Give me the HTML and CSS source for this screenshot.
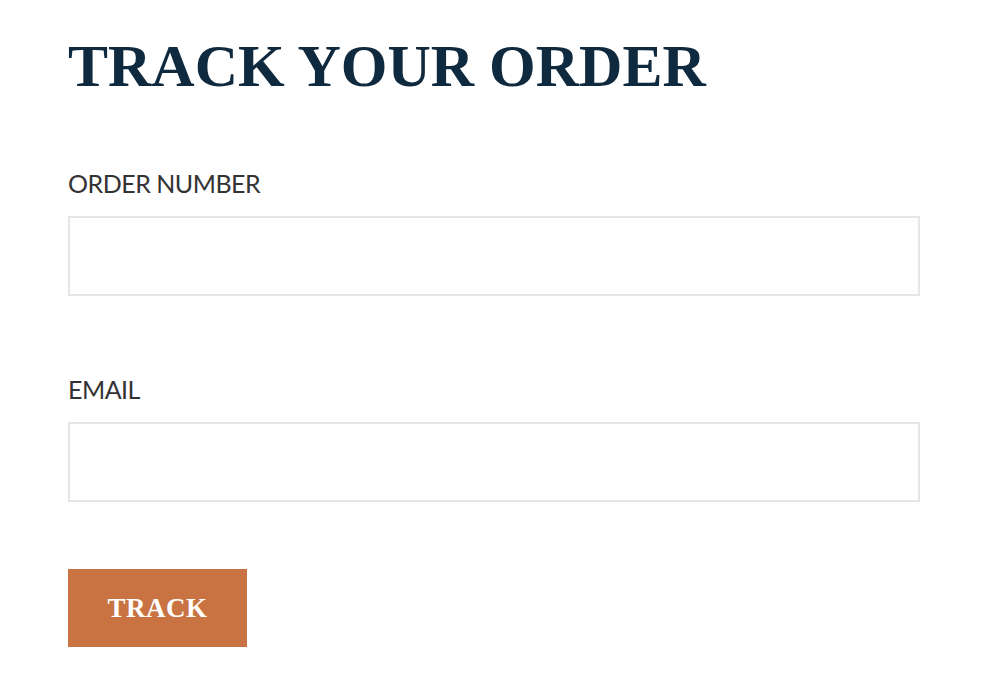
FILE: index.html
```html
<!DOCTYPE html>
<html lang="en">
<head>
  <meta charset="UTF-8">
  <title>Track your order</title>
  <link rel="stylesheet" href="styles.css">
</head>
<body>
  <div class="container">
    <h1>Track your order</h1>
    <form class="track-form">
      <label class="field">
        <span class="label">Order number</span>
        <input type="text" name="order">
      </label>
      <label class="field">
        <span class="label">Email</span>
        <input type="email" name="email">
      </label>
      <button type="button" class="track-button">Track</button>
    </form>
  </div>
</body>
</html>
```

FILE: styles.css
```css
body { margin: 0; background: #fff; font-family: Lato, "Open Sans", sans-serif; }
.container { padding: 29px 80px 0 68px; }
h1 {
  margin: 0;
  font-family: "Liberation Serif", "DejaVu Serif", serif;
  font-weight: bold;
  font-size: 60px;
  letter-spacing: 0;
  text-transform: uppercase;
  color: #0f2a3f;
  line-height: 74px;
}
.track-form { margin-top: 67px; display: flex; flex-direction: column; gap: 67px; }
.field { display: flex; flex-direction: column; }
.field + .field { margin-top: 13px; }
.label {
  font-size: 25px;
  letter-spacing: -0.5px;
  text-transform: uppercase;
  color: #333;
  line-height: 26px;
  margin-bottom: 20px;
}
.field input {
  width: 852px;
  height: 80px;
  box-sizing: border-box;
  border: 2px solid #e6e6e6;
  background: #fff;
  font-size: 18px;
  padding: 0 16px;
}
.track-button {
  align-self: flex-start;
  width: 179px;
  height: 78px;
  border: none;
  background: #c87341;
  color: #fff;
  font-family: "Liberation Serif", "DejaVu Serif", serif;
  font-weight: bold;
  font-size: 27px;
  letter-spacing: 0.5px;
  text-transform: uppercase;
  cursor: pointer;
}
```
